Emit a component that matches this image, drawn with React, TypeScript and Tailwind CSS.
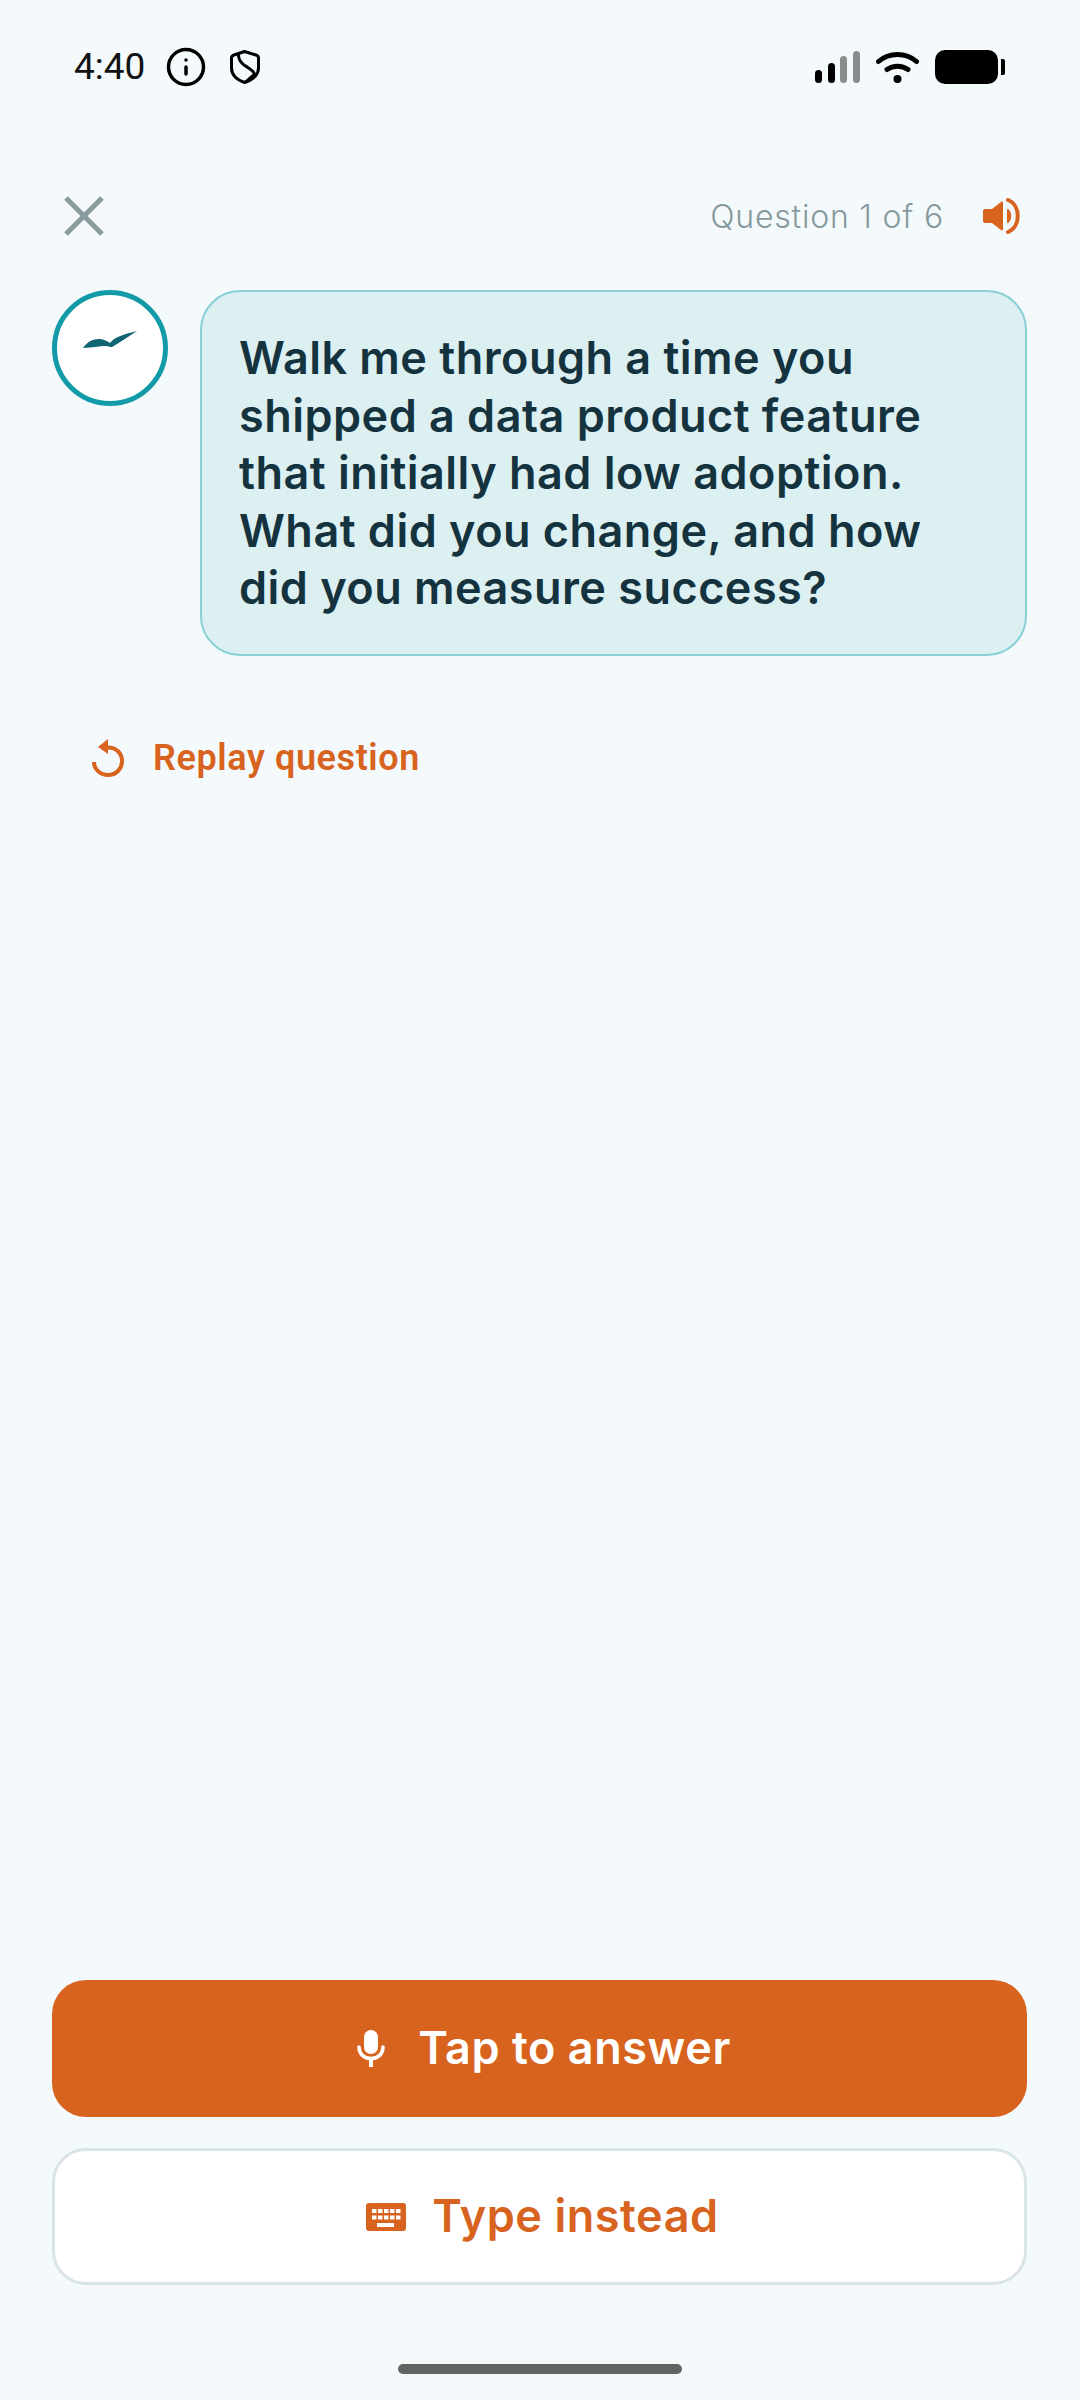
import { Info, X } from 'lucide-react'

const inter = "font-['Inter',sans-serif]"
const roboto = "font-['Roboto',sans-serif]"

function ShieldIcon() {
  return (
    <svg width="30" height="34" viewBox="0 0 30 34" fill="none" stroke="#000" strokeWidth="3" strokeLinejoin="round">
      <path d="M14.5 1.5 L26 5 C28 5.6 28.5 6 28.5 8 V18 C28.5 25 22 30 14.5 32.5 C7.5 30 1.5 25 1.5 18 V8 C1.5 6 2 5.6 4 5 Z" />
      <path d="M8.5 4 C8 10 11 13 15.5 16 C20 19 24 21 24.5 24 L15 32.5" />
    </svg>
  )
}

function SignalIcon() {
  return (
    <svg width="45" height="32" viewBox="0 0 45 32">
      <rect x="0" y="19" width="7" height="13" rx="3.5" fill="#000" />
      <rect x="13" y="12" width="7" height="20" rx="3.5" fill="#000" />
      <rect x="25" y="5" width="7" height="27" rx="3.5" fill="#8a8d8d" />
      <rect x="38" y="0" width="7" height="32" rx="3.5" fill="#8a8d8d" />
    </svg>
  )
}

function WifiIcon() {
  return (
    <svg width="43" height="32" viewBox="0 0 43 32" fill="none" stroke="#000" strokeLinecap="round">
      <path d="M2.5 10.5 C13 1 30 1 40.5 10.5" strokeWidth="5" />
      <path d="M11 18.5 C17 14 26 14 32 18.5" strokeWidth="5" />
      <circle cx="21.5" cy="28" r="4" fill="#000" stroke="none" />
    </svg>
  )
}

function BatteryIcon() {
  return (
    <svg width="70" height="34" viewBox="0 0 70 34">
      <rect x="0" y="0" width="63" height="34" rx="10" fill="#000" />
      <path d="M66 9 H68 C69.5 9 70 10 70 11 V23 C70 24 69.5 25 68 25 H66 Z" fill="#000" />
    </svg>
  )
}

function SpeakerIcon() {
  return (
    <svg width="39" height="36" viewBox="0 0 39 36">
      <path d="M2 11 H9 L18 4 C19.5 3 20 4 20 5 V31 C20 32 19.5 33 18 32 L9 25 H2 C1 25 0 24 0 23 V13 C0 12 1 11 2 11 Z" fill="#d8631e" />
      <path d="M25 12 C28 15 28 21 25 24 Z" fill="#d8631e" stroke="#d8631e" strokeWidth="2" strokeLinejoin="round" />
      <path d="M25 2 C38 7 38 29 25 34" fill="none" stroke="#d8631e" strokeWidth="4" strokeLinecap="round" />
    </svg>
  )
}

function BirdIcon() {
  return (
    <svg width="54" height="17" viewBox="0 0 54 17">
      <path d="M0 17 C5 10 11 7.5 17 8 C21 8.5 24 10 27 12 C31 6 42 3 54 0 C46 5 38 11 29 16 L27 16 C24 14.5 20 15 14 15.8 C8 16.5 4 16.8 0 17 Z" fill="#0f6572" />
    </svg>
  )
}

function ReplayIcon() {
  return (
    <svg width="32" height="38" viewBox="0 0 32 38" fill="none">
      <path d="M16 8.5 C24 8.5 30 14 30 22 C30 30 24 36 16 36 C8 36 2 30 2 23" stroke="#d8631e" strokeWidth="4" />
      <path d="M16 0 V15 L6 8 Z" fill="#d8631e" />
    </svg>
  )
}

function MicIcon() {
  return (
    <svg width="28" height="37" viewBox="0 0 28 37" fill="none">
      <rect x="7" y="0" width="14" height="24" rx="7" fill="#fff" />
      <path d="M2 17 C2 24 7 28.5 14 28.5 C21 28.5 26 24 26 17" stroke="#fff" strokeWidth="3.5" strokeLinecap="round" />
      <rect x="12" y="28" width="4" height="9" fill="#fff" />
    </svg>
  )
}

function KeyboardIcon() {
  const keys = [7, 13, 19, 25, 31]
  return (
    <svg width="40" height="28" viewBox="0 0 40 28">
      <rect x="0" y="0" width="40" height="28" rx="3" fill="#d8631e" />
      {keys.map((x) => (
        <rect key={`a${x}`} x={x - 1} y="6" width="4.5" height="4" fill="#fff" />
      ))}
      {keys.map((x) => (
        <rect key={`b${x}`} x={x - 1} y="12.5" width="4.5" height="4" fill="#fff" />
      ))}
      <rect x="11" y="20" width="17" height="4" fill="#fff" />
    </svg>
  )
}

export default function App() {
  return (
    <div className="flex h-[2400px] w-[1080px] flex-col bg-[#f4fafc]">
      {/* Status bar */}
      <div className="flex h-[133px] items-center justify-between pl-[74px] pr-[75px]">
        <div className="flex items-center">
          <span className={`${roboto} text-[37px] leading-none text-[#111]`}>4:40</span>
          <Info className="ml-[20px] h-[42px] w-[42px] text-black" strokeWidth={2} />
          <span className="ml-[23px] flex">
            <ShieldIcon />
          </span>
        </div>
        <div className="flex items-center">
          <SignalIcon />
          <span className="ml-[16px] flex">
            <WifiIcon />
          </span>
          <span className="ml-[16px] flex">
            <BatteryIcon />
          </span>
        </div>
      </div>

      {/* Header */}
      <div className="mt-[53px] mb-[44px] flex h-[60px] items-center justify-between pl-[48px] pr-[58px]">
        <X className="h-[72px] w-[72px] text-[#8a9ba0]" strokeWidth={1.7} strokeLinecap="butt" />
        <div className="flex items-center">
          <span className={`${inter} pt-[2px] text-[32px] font-light tracking-[0.8px] text-[#85999f]`}>Question 1 of 6</span>
          <span className="ml-[39px] flex">
            <SpeakerIcon />
          </span>
        </div>
      </div>

      {/* Question */}
      <div className="flex items-start gap-[32px] pl-[52px] pr-[53px]">
        <div className="flex h-[116px] w-[116px] shrink-0 items-center justify-center rounded-full border-[5px] border-[#129aa8] bg-white pb-[18px]">
          <BirdIcon />
        </div>
        <div className="flex-1 rounded-[40px] border-2 border-[#88cfd6] bg-[#dcf0f2] pt-[37px] pr-[50px] pb-[37px] pl-[37px]">
          <p className={`${inter} text-[45px] leading-[57.6px] font-semibold tracking-[0.47px] text-[#15333f]`}>
            Walk me through a time you shipped a data product feature that initially had low adoption. What did you
            change, and how did you measure success?
          </p>
        </div>
      </div>

      {/* Replay */}
      <div className="mt-[82px] flex h-[40px] items-center gap-[29px] pl-[92px]">
        <ReplayIcon />
        <span className={`${roboto} text-[36px] font-semibold tracking-[0.6px] text-[#d8631e]`}>Replay question</span>
      </div>

      {/* Actions */}
      <div className="mt-auto flex flex-col gap-[31px] pl-[52px] pr-[53px]">
        <button className="flex h-[137px] items-center justify-center gap-[33px] rounded-[34px] bg-[#d8631e] pl-[9px]">
          <MicIcon />
          <span className={`${inter} pb-[2px] text-[45px] font-semibold tracking-[0.55px] text-white`}>Tap to answer</span>
        </button>
        <button className="flex h-[137px] items-center justify-center gap-[26px] rounded-[34px] border-[3px] border-[#d8e4e8] bg-white pl-[6px]">
          <KeyboardIcon />
          <span className={`${inter} pb-[2px] text-[45px] font-semibold tracking-[0.55px] text-[#d8631e]`}>Type instead</span>
        </button>
      </div>

      {/* Home indicator */}
      <div className="mt-[79px] mb-[26px] flex justify-center">
        <div className="h-[10px] w-[284px] rounded-full bg-[#636564]" />
      </div>
    </div>
  )
}
